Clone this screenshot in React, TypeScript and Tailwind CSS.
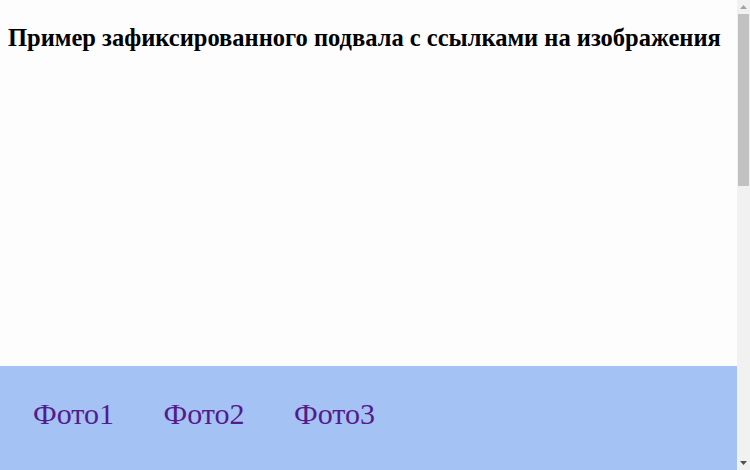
export default function App() {
  const links = ['Фото1', 'Фото2', 'Фото3']

  return (
    <div className="flex h-[470px] w-[750px] overflow-hidden bg-[#fdfdfd] font-['Liberation_Serif',serif]">
      <div className="flex flex-1 flex-col">
        <h1 className="m-0 whitespace-nowrap px-2 pt-[22px] text-[24.5px] font-bold leading-[32px] text-black">
          Пример зафиксированного подвала с ссылками на изображения
        </h1>
        <div className="flex-1" />
        <footer className="flex h-[104px] items-center gap-[49.5px] bg-[#a4c2f4] pl-[33px] pb-[8px]">
          {links.map((l) => (
            <a key={l} href="#" className="text-[30px] leading-none text-[#551a8b]">
              {l}
            </a>
          ))}
        </footer>
      </div>
      <div className="flex w-[13px] flex-col bg-[#f1f1f1]">
        <div className="flex h-[14px] items-center justify-center">
          <svg width="7" height="4" viewBox="0 0 7 4">
            <path d="M0 4 L3.5 0 L7 4 Z" fill="#a3a3a3" />
          </svg>
        </div>
        <div className="mx-[1px] h-[172px] bg-[#c1c1c1]" />
        <div className="flex-1" />
        <div className="flex h-[14px] items-center justify-center">
          <svg width="7" height="4" viewBox="0 0 7 4">
            <path d="M0 0 L7 0 L3.5 4 Z" fill="#505050" />
          </svg>
        </div>
      </div>
    </div>
  )
}
